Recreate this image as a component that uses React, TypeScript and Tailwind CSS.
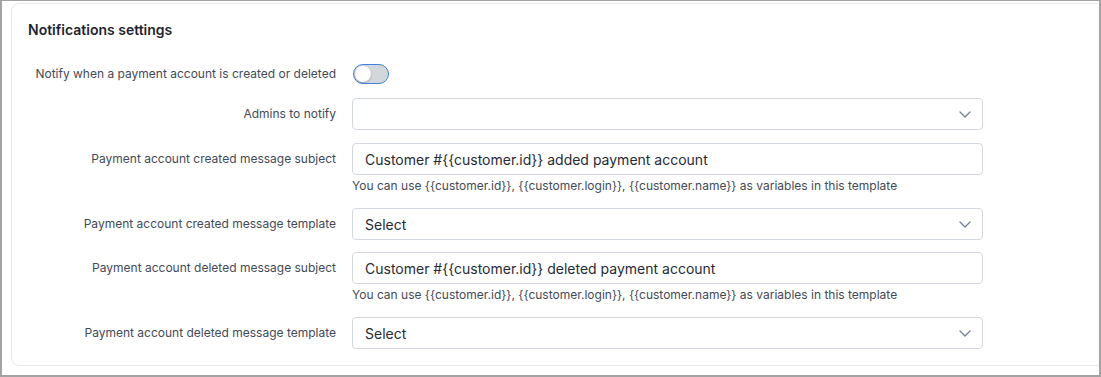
import React from 'react'

const font = { fontFamily: 'Inter, "Noto Sans", sans-serif' }

function Chevron() {
  return (
    <svg width="12" height="7" viewBox="0 0 12 7" fill="none" className="shrink-0">
      <path d="M1 1l5 5 5-5" stroke="#71809a" strokeWidth="1.3" strokeLinecap="round" strokeLinejoin="round" />
    </svg>
  )
}

function Label({ children }: { children: React.ReactNode }) {
  return (
    <div className="flex h-8 w-[308px] shrink-0 items-center justify-end text-right text-[12px] text-[#434a57]">
      {children}
    </div>
  )
}

function SelectBox({ value }: { value?: string }) {
  return (
    <div className="flex h-8 w-[631px] items-center justify-between rounded-[4px] border border-[#d3d8e0] bg-white pl-3 pr-[11px] text-[14px] text-[#262b36]">
      <span>{value ?? ''}</span>
      <Chevron />
    </div>
  )
}

function TextBox({ value }: { value: string }) {
  return (
    <div className="flex h-8 w-[631px] items-center rounded-[4px] border border-[#d3d8e0] bg-white px-3 text-[14px] text-[#262b36]">
      {value}
    </div>
  )
}

const help =
  'You can use {{customer.id}}, {{customer.login}}, {{customer.name}} as variables in this template'

export default function App() {
  return (
    <div
      style={font}
      className="h-[377px] w-[1101px] overflow-hidden border-t border-b-2 border-l-2 border-r-2 border-[#a3a3a3] bg-white pl-[9px] pt-[2px]"
    >
      <div className="-mr-4 rounded-lg border border-[#e6e8ec] bg-white px-4 pb-4 pt-4">
        <h2 className="h-5 text-[14px] font-semibold leading-5 text-[#1f2430]">Notifications settings</h2>

        <div className="mt-6 flex h-5 items-center gap-4">
          <div className="flex h-5 w-[308px] shrink-0 items-center justify-end text-[12px] text-[#434a57]">
            Notify when a payment account is created or deleted
          </div>
          <div className="ml-[1px] flex h-5 w-9 items-center rounded-full border border-[#3f7fe6] bg-[#d3d6db] px-[1px]">
            <div className="h-4 w-4 rounded-full bg-white shadow-[0_1px_2px_rgba(0,0,0,0.25)]" />
          </div>
        </div>

        <div className="mt-[14px] flex gap-4">
          <Label>Admins to notify</Label>
          <SelectBox />
        </div>

        <div className="mt-[13px] flex gap-4">
          <Label>Payment account created message subject</Label>
          <div>
            <TextBox value="Customer #{{customer.id}} added payment account" />
            <p className="mt-[3px] text-[12px] leading-4 text-[#434a57]">{help}</p>
          </div>
        </div>

        <div className="mt-[14px] flex gap-4">
          <Label>Payment account created message template</Label>
          <SelectBox value="Select" />
        </div>

        <div className="mt-3 flex gap-4">
          <Label>Payment account deleted message subject</Label>
          <div>
            <TextBox value="Customer #{{customer.id}} deleted payment account" />
            <p className="mt-[3px] text-[12px] leading-4 text-[#434a57]">{help}</p>
          </div>
        </div>

        <div className="mt-[14px] flex gap-4">
          <Label>Payment account deleted message template</Label>
          <SelectBox value="Select" />
        </div>
      </div>
    </div>
  )
}
